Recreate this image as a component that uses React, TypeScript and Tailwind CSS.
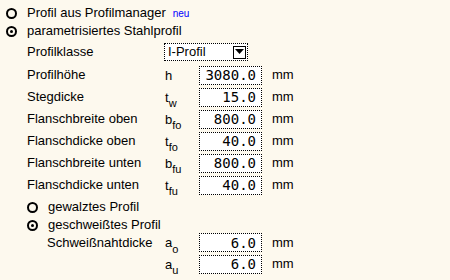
import React from "react";

const Radio = ({ checked }: { checked?: boolean }) => (
  <span className="relative inline-flex h-[11px] w-[11px] shrink-0 items-center justify-center rounded-full border-2 border-black">
    {checked && <span className="h-[3px] w-[3px] rounded-full bg-black" />}
  </span>
);

const Field = ({ value }: { value: string }) => (
  <div
    className="flex h-[19px] w-[63px] items-center justify-end border border-dotted border-black bg-white pr-[5px] text-[14px] leading-none"
    style={{ fontFamily: '"DejaVu Sans Mono", monospace' }}
  >
    {value}
  </div>
);

const Sym = ({ base, sub }: { base: string; sub?: string }) => (
  <span className="w-[34px] shrink-0 leading-none">
    {base}
    {sub && <sub className="text-[11px] align-[-3px]">{sub}</sub>}
  </span>
);

const Row = ({
  label,
  base,
  sub,
  value,
  indent,
  h = "h-[22px]",
}: {
  label: string;
  base: string;
  sub?: string;
  value: string;
  indent?: boolean;
  h?: string;
}) => (
  <div className={`flex ${h} items-center`}>
    <span className={indent ? "w-[138px] shrink-0 pl-[20px]" : "w-[138px] shrink-0"}>{label}</span>
    <Sym base={base} sub={sub} />
    <Field value={value} />
    <span className="ml-[10px]">mm</span>
  </div>
);

export default function App() {
  return (
    <div
      className="h-[280px] w-[450px] overflow-hidden bg-[#fdf9ee] pl-[6px] pt-[4px] text-[13px] text-black"
      style={{ fontFamily: '"Liberation Sans", Arial, sans-serif' }}
    >
      <div className="flex h-[18px] items-center gap-[10px]">
        <Radio />
        <span>Profil aus Profilmanager</span>
        <span className="ml-[-3px] text-[10px] text-[#0000ff]">neu</span>
      </div>
      <div className="flex h-[18px] items-center gap-[10px]">
        <Radio checked />
        <span>parametrisiertes Stahlprofil</span>
      </div>
      <div className="pl-[21px]">
        <div className="flex h-[24px] items-center">
          <span className="w-[137px] shrink-0">Profilklasse</span>
          <div className="flex h-[18px] w-[84px] items-center justify-between border border-dotted border-black bg-white pl-[3px] pr-[1px]">
            <span>I-Profil</span>
            <span className="flex h-[13px] w-[13px] items-center justify-center border border-black bg-white">
              <svg width="9" height="6" viewBox="0 0 9 6">
                <polygon points="0,0 9,0 4.5,5" fill="black" />
              </svg>
            </span>
          </div>
        </div>
        <Row label="Profilhöhe" base="h" value="3080.0" />
        <Row label="Stegdicke" base="t" sub="w" value="15.0" />
        <Row label="Flanschbreite oben" base="b" sub="fo" value="800.0" />
        <Row label="Flanschdicke oben" base="t" sub="fo" value="40.0" />
        <Row label="Flanschbreite unten" base="b" sub="fu" value="800.0" />
        <Row label="Flanschdicke unten" base="t" sub="fu" value="40.0" />
        <div className="flex h-[22px] items-center gap-[10px]">
          <Radio />
          <span>gewalztes Profil</span>
        </div>
        <div className="flex h-[14px] items-center gap-[10px]">
          <Radio checked />
          <span>geschweißtes Profil</span>
        </div>
        <Row label="Schweißnahtdicke" base="a" sub="o" value="6.0" indent h="h-[21px]" />
        <Row label="" base="a" sub="u" value="6.0" />
      </div>
    </div>
  );
}
